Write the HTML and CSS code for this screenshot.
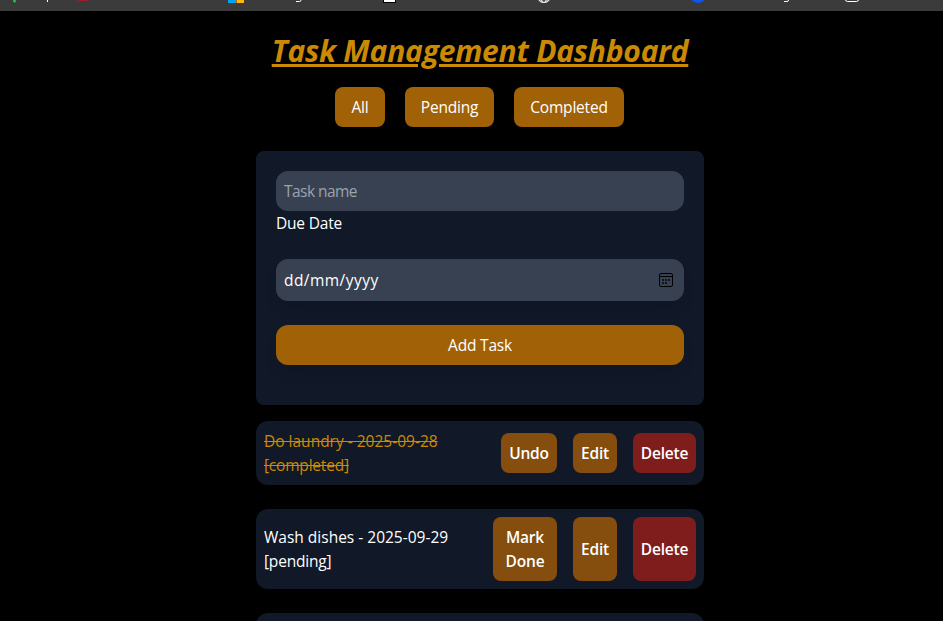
FILE: index.html
```html
<!DOCTYPE html>
<html lang="en">
<head>
<meta charset="utf-8">
<title>Task Management Dashboard</title>
<link rel="stylesheet" href="styles.css">
</head>
<body>
<div class="bookmarks">
<svg width="943" height="11" viewBox="0 0 943 11" aria-hidden="true">
<path d="M14 0h2v2h-1v1h-1v-1h-1v-2z" fill="#34a853"/>
<path d="M47 0h1v2h-1z" fill="#fff"/>
<path d="M77 0h12l-1 1h-10z" fill="#9b1c31"/>
<path d="M228 0h8v3h-8z" fill="#00a4ef"/>
<path d="M237 0h7v3h-7z" fill="#ffb900"/>
<path d="M236 0h1v3h-1z" fill="#a66a22"/>
<path d="M296 1.5h3.5q1.5 0 1.5-1.5" fill="none" stroke="#fff"/>
<path d="M383 0h13v3h-13z" fill="#000"/>
<path d="M384 0h11v2h-11z" fill="#fff"/>
<g fill="none" stroke="#e4e4e4" stroke-width="1.2"><circle cx="544" cy="-3.5" r="6"/><ellipse cx="544" cy="-3.5" rx="2.8" ry="6"/><path d="M538 -.5h12"/></g>
<circle cx="698" cy="-5" r="8" fill="#1155e6"/>
<path d="M784 1.5h3q1.5 0 1.5-1.5" fill="none" stroke="#fff"/>
<rect x="845.5" y="-9" width="13" height="10.5" rx="2" fill="none" stroke="#fff"/>
</svg>
</div>
<main class="page">
<h1 class="title">Task Management Dashboard</h1>
<nav class="filters">
<button class="filter filter-all">All</button>
<button class="filter filter-pending">Pending</button>
<button class="filter filter-completed">Completed</button>
</nav>
<form class="form">
<input class="field" type="text" placeholder="Task name">
<label class="label">Due Date</label>
<div class="field date"><span class="date-text">dd/mm/yyyy</span>
<svg width="14" height="14" viewBox="0 0 14 14" aria-hidden="true"><rect x=".5" y=".5" width="13" height="13" rx="1.5" fill="none" stroke="#000"/><path d="M1 3.5h12" stroke="#000"/><path d="M3 6h2v2H3zM6 6h2v2H6zM9 6h2v2H9zM3 9h2v2H3zM6 9h2v2H6z" fill="#10151c"/></svg>
</div>
<button class="add" type="button">Add Task</button>
</form>
<ul class="tasks">
<li class="task"><p class="name done"><span class="summary">Do laundry - 2025-09-28</span><br>[completed]</p>
<div class="actions"><button class="action undo">Undo</button><button class="action edit">Edit</button><button class="action delete">Delete</button></div></li>
<li class="task"><p class="name"><span class="summary">Wash dishes - 2025-09-29</span><br>[pending]</p>
<div class="actions"><button class="action mark">Mark<br>Done</button><button class="action edit">Edit</button><button class="action delete">Delete</button></div></li>
<li class="task"></li>
</ul>
</main>
</body>
</html>
```
FILE: styles.css
```css
* { box-sizing: border-box; }
body { margin: 0; height: 621px; overflow: hidden; background: #000; color: #fff; font: 15.5px/24px "Open Sans", sans-serif; letter-spacing: -.2px; }
button, input { border: 0; margin: 0; color: inherit; font: inherit; letter-spacing: inherit; }
.bookmarks { height: 11px; background: #3b3b3b; overflow: hidden; }
.bookmarks svg { display: block; }
.page { width: 448px; height: 610px; margin: 0 0 0 256px; padding-top: 22px; overflow: hidden; }
.title { margin: 0; color: #ca8a04; font-size: 30px; line-height: 36px; font-weight: 700; font-style: italic; text-align: center; white-space: nowrap; text-decoration: underline; text-decoration-thickness: 3px; text-underline-offset: 2px; letter-spacing: -.22px; }
.filters { display: flex; justify-content: center; gap: 20px; margin-top: 18px; padding-right: 1px; }
.filter { height: 40px; padding: 0; border-radius: 8px; background: #a16207; }
.filter-all { width: 50px; }
.filter-pending { width: 89px; }
.filter-completed { width: 110px; }
.form { display: flex; flex-direction: column; height: 254px; margin-top: 24px; padding: 20px; border-radius: 8px; background: #111827; }
.field { height: 40px; padding: 0 8px; border-radius: 12px; background: #374151; }
.field::placeholder { color: #9ca3af; opacity: 1; letter-spacing: -.55px; }
.label { height: 24px; margin: 0 0 24px; }
.date { display: flex; align-items: center; justify-content: space-between; height: 42px; padding-right: 11px; box-shadow: 0 10px 15px -3px rgba(0, 0, 0, .1); }
.date-text { letter-spacing: .45px; }
.add { height: 40px; margin-top: 24px; border-radius: 12px; background: #a16207; box-shadow: 0 10px 15px -3px rgba(0, 0, 0, .1); }
.tasks { display: flex; flex-direction: column; gap: 24px; margin: 16px 0 0; padding: 0; list-style: none; }
.task { display: flex; align-items: center; justify-content: space-between; min-height: 64px; padding: 8px; border-radius: 12px; background: #111827; }
.name { margin: 0; white-space: nowrap; }
.summary { letter-spacing: 0; }
.done { color: #ca8a04; text-decoration: line-through; }
.actions { display: flex; gap: 16px; }
.action { min-height: 40px; padding: 0; border-radius: 8px; background: #854d0e; font-weight: 600; }
.undo { width: 56px; }
.mark { width: 64px; height: 64px; }
.edit { width: 44px; }
.delete { width: 63px; background: #7f1d1d; }
```
